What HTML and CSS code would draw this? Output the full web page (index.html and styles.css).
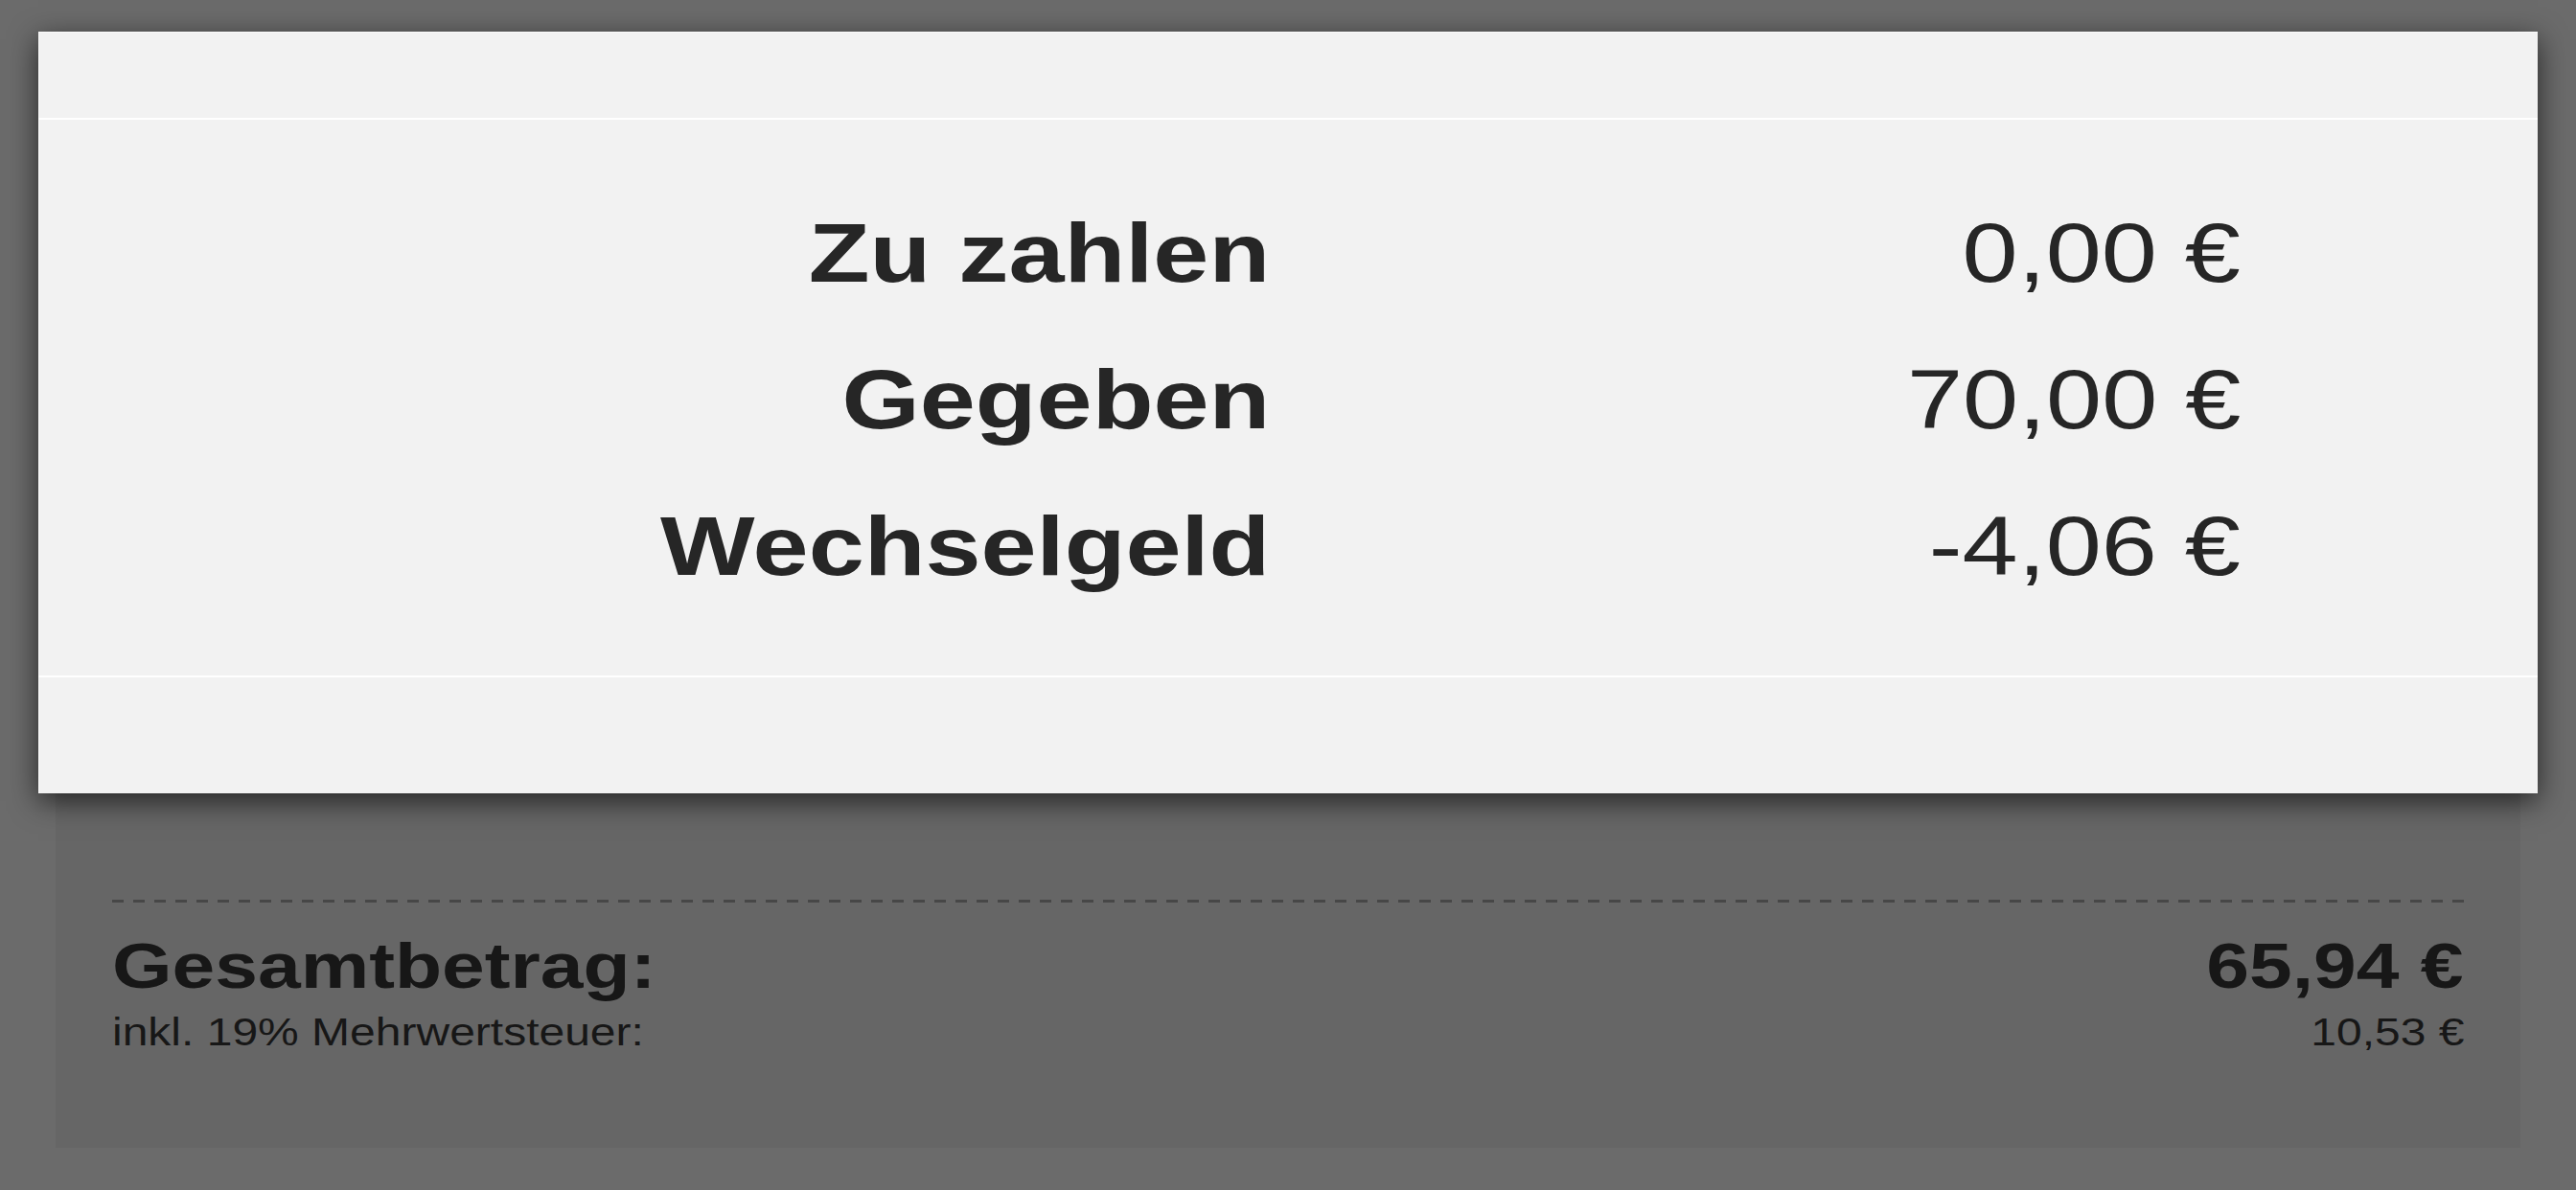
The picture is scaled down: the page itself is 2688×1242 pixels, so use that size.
FILE: index.html
```html
<!DOCTYPE html>
<html lang="de">
<head>
<meta charset="utf-8">
<title>Zahlung</title>
<link rel="stylesheet" href="styles.css">
</head>
<body>
<div class="page">
  <section class="card">
    <div class="card-top"></div>
    <div class="summary">
      <div class="label"><span class="wide wide-r">Zu zahlen</span></div>
      <div class="value"><span class="wide wide-r">0,00 €</span></div>
      <div class="label"><span class="wide wide-r">Gegeben</span></div>
      <div class="value"><span class="wide wide-r">70,00 €</span></div>
      <div class="label"><span class="wide wide-r">Wechselgeld</span></div>
      <div class="value"><span class="wide wide-r">-4,06 €</span></div>
    </div>
    <div class="card-bottom"></div>
  </section>
  <section class="receipt">
    <div class="dashes"></div>
    <div class="total-row">
      <span class="wide wide-l">Gesamtbetrag:</span>
      <span class="wide wide-r">65,94 €</span>
    </div>
    <div class="tax-row">
      <span class="wide wide-l">inkl. 19% Mehrwertsteuer:</span>
      <span class="wide wide-r">10,53 €</span>
    </div>
  </section>
</div>
</body>
</html>
```

FILE: styles.css
```css
html, body {
  margin: 0;
  padding: 0;
  height: 100%;
}
body {
  background: #6b6b6b;
  font-family: "Liberation Sans", Arial, Helvetica, sans-serif;
  overflow: hidden;
}
.page {
  padding-top: 33px;
}
.wide {
  display: inline-block;
  transform: scaleX(1.2);
}
.wide-r { transform-origin: right center; }
.wide-l { transform-origin: left center; }

.card {
  position: relative;
  z-index: 2;
  margin: 0 40px;
  height: 795px;
  background: #f2f2f2;
  box-shadow: 0 8px 28px rgba(0, 0, 0, 0.65), inset 1px 1px 0 #fafafa;
  display: flex;
  flex-direction: column;
}
.card-top {
  height: 90px;
  border-bottom: 2px solid #ffffff;
}
.summary {
  display: grid;
  grid-template-columns: 1285px 1013px;
  grid-auto-rows: 153px;
  padding: 62px 0 59px;
  color: #262626;
  font-size: 87px;
  line-height: 153px;
}
.label {
  text-align: right;
  font-weight: bold;
}
.value {
  text-align: right;
  font-weight: normal;
}
.card-bottom {
  flex: 1;
  border-top: 2px solid #ffffff;
}

.receipt {
  position: relative;
  z-index: 1;
  margin: -40px 58px 0;
  background: #666666;
  padding: 151px 59px 101px;
  color: #171717;
}
.dashes {
  height: 3px;
  background: repeating-linear-gradient(to right, #474747 0 12px, transparent 12px 22px);
}
.total-row {
  display: flex;
  justify-content: space-between;
  margin-top: 32px;
  font-size: 67px;
  line-height: 67px;
  font-weight: bold;
}
.tax-row {
  display: flex;
  justify-content: space-between;
  margin-top: 16px;
  font-size: 40px;
  line-height: 40px;
}
```
